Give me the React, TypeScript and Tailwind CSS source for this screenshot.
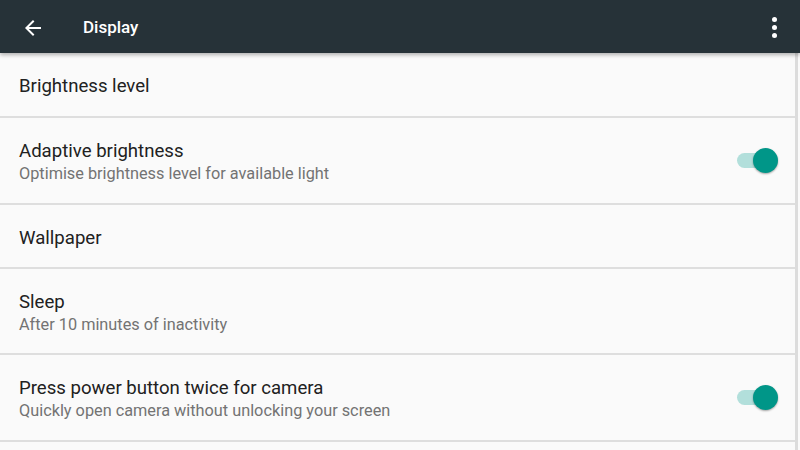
import React from "react";

function Toggle() {
  return (
    <div className="relative w-[44px] h-[26px] flex items-center">
      <div className="absolute left-[2px] w-[34px] h-[15px] rounded-full bg-[#b2dfdb]" />
      <div className="absolute right-[1px] w-[25px] h-[25px] rounded-full bg-[#009688] shadow-[0_1px_2px_rgba(0,0,0,0.35)]" />
    </div>
  );
}

function Row({
  title,
  sub,
  toggle,
  h,
}: {
  title: string;
  sub?: string;
  toggle?: boolean;
  h: string;
}) {
  return (
    <div className={`flex items-center justify-between pl-[19px] pr-[16px] border-b-2 border-[#dedede] ${h}`}>
      <div className="flex flex-col pt-[3px]">
        <div className="text-[18.6px] leading-[24px] text-[#212121]">{title}</div>
        {sub && <div className="text-[16.3px] leading-[22px] text-[#737373]">{sub}</div>}
      </div>
      {toggle && <Toggle />}
    </div>
  );
}

export default function App() {
  return (
    <div
      className="w-[800px] h-[450px] overflow-hidden bg-[#fafafa] flex flex-col"
      style={{ fontFamily: "Roboto, 'Noto Sans', sans-serif" }}
    >
      <div className="relative z-10 h-[53px] bg-[#263238] flex items-center pt-[2px] shadow-[0_2px_4px_rgba(0,0,0,0.3)] shrink-0">
        <div className="w-[83px] flex items-center pl-[21px]">
          <svg width="24" height="24" viewBox="0 0 24 24">
            <path d="M20 11H7.83l5.59-5.59L12 4l-8 8 8 8 1.41-1.41L7.83 13H20v-2z" fill="#ffffff" />
          </svg>
        </div>
        <div className="text-white text-[17px] font-medium">Display</div>
        <div className="ml-auto mr-[23px] flex flex-col gap-[3px] items-center">
          <div className="w-[5px] h-[5px] rounded-full bg-white" />
          <div className="w-[5px] h-[5px] rounded-full bg-white" />
          <div className="w-[5px] h-[5px] rounded-full bg-white" />
        </div>
      </div>
      <div className="flex flex-1">
        <div className="flex-1 flex flex-col">
          <Row title="Brightness level" h="h-[65px]" />
          <Row
            title="Adaptive brightness"
            sub="Optimise brightness level for available light"
            toggle
            h="h-[87px]"
          />
          <Row title="Wallpaper" h="h-[64px]" />
          <Row title="Sleep" sub="After 10 minutes of inactivity" h="h-[86px]" />
          <Row
            title="Press power button twice for camera"
            sub="Quickly open camera without unlocking your screen"
            toggle
            h="h-[87px]"
          />
        </div>
        <div className="w-[3px] bg-[#dcdcdc] mr-[2px]" />
      </div>
    </div>
  );
}
